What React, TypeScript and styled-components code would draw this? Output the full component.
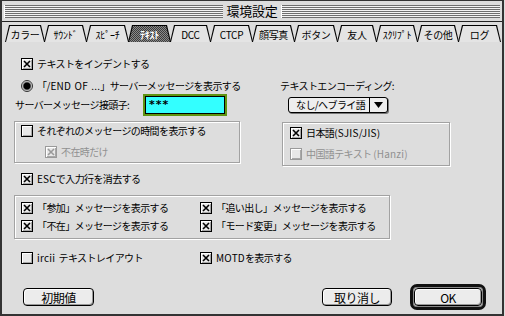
import styled, { createGlobalStyle } from "styled-components";

const Global = createGlobalStyle`
  html, body { margin: 0; padding: 0; background: #dddddd; }
  body {
    font-family: "Noto Sans CJK JP", "Liberation Sans", sans-serif;
    font-size: 10px;
    color: #000;
  }
`;

const Window = styled.div`
  width: 504px;
  height: 316px;
  box-sizing: border-box;
  background: #dddddd;
  border: 2px solid #333;
  border-top: 1px solid #333;
  display: flex;
  flex-direction: column;
`;

const TitleBar = styled.div`
  height: 21px;
  box-sizing: border-box;
  border-bottom: 1px solid #222;
  display: flex;
  align-items: center;
  padding: 0 2px;
  background: #dddddd;
`;

const Stripes = styled.div`
  flex: 1;
  height: 13px;
  background: repeating-linear-gradient(to bottom, #6f6f6f 0 1px, #f4f4f4 1px 2px);
  border-left: 1px solid #fff;
`;

const Title = styled.div`
  padding: 0 4px;
  font-size: 13px;
  letter-spacing: -0.3px;
  line-height: 16px;
`;

const TabBar = styled.div`
  height: 20px;
  display: flex;
  align-items: flex-end;
  padding-left: 3px;
`;

const tabShape = "polygon(0 100%, 4px 0, calc(100% - 4px) 0, 100% 100%)";

const Tab = styled.div<{ $w: number }>`
  width: ${(p) => p.$w}px;
  height: 17px;
  margin-right: -1px;
  background: #000;
  clip-path: ${tabShape};
  padding: 1px 1px 0;
  box-sizing: border-box;
  display: flex;
`;

const TabFace = styled.div<{ $active?: boolean }>`
  flex: 1;
  clip-path: ${tabShape};
  background: ${(p) =>
    p.$active
      ? "repeating-conic-gradient(#3c3c3c 0 25%, #8a8a8a 0 50%) 0 0 / 2px 2px"
      : "#e4e4e4"};
  color: ${(p) => (p.$active ? "#fff" : "#000")};
  font-weight: ${(p) => (p.$active ? 700 : 400)};
  font-size: 10px;
  display: flex;
  align-items: center;
  justify-content: center;
  letter-spacing: -0.3px;
  white-space: nowrap;
`;

const Panel = styled.div`
  flex: 1;
  display: flex;
  flex-direction: column;
  padding: 0 16px 0 12px;
`;

const Row = styled.div<{ $top: number; $h?: number }>`
  display: flex;
  align-items: center;
  margin-top: ${(p) => p.$top}px;
  height: ${(p) => p.$h ?? 14}px;
  flex: none;
`;

const Left = styled.div<{ $w: number; $pad?: number }>`
  width: ${(p) => p.$w}px;
  padding-left: ${(p) => p.$pad ?? 0}px;
  box-sizing: border-box;
  display: flex;
  align-items: center;
  flex: none;
`;

const Label = styled.span<{ $disabled?: boolean }>`
  color: ${(p) => (p.$disabled ? "#909090" : "#000")};
  letter-spacing: -0.6px;
  white-space: nowrap;
  line-height: 14px;
`;

const Lat = styled.span`
  letter-spacing: 0.2px;
  word-spacing: 1px;
`;

const CheckRow = styled.div<{ $indent?: number; $top?: number }>`
  display: flex;
  align-items: center;
  height: 14px;
  margin-left: ${(p) => p.$indent ?? 0}px;
  margin-top: ${(p) => p.$top ?? 0}px;
`;

const Box = styled.span<{ $disabled?: boolean }>`
  width: 12px;
  height: 12px;
  margin-right: 4px;
  box-sizing: border-box;
  border: 1px solid ${(p) => (p.$disabled ? "#9a9a9a" : "#000")};
  background: #e8e8e8;
  box-shadow: inset 1px 1px 0 #fff, inset -1px -1px 0 #a8a8a8;
  display: inline-flex;
  align-items: center;
  justify-content: center;
  flex: none;
`;

const Radio = styled.span`
  width: 12px;
  height: 12px;
  margin-right: 4px;
  border-radius: 50%;
  box-sizing: border-box;
  border: 1px solid #333;
  background: radial-gradient(circle at 50% 50%, #000 0 3.2px, #555 3.6px, #bdbdbd 4.5px, #eee 5.2px);
  flex: none;
`;

function Check({ on, disabled, children }: { on?: boolean; disabled?: boolean; children: React.ReactNode }) {
  const c = disabled ? "#9a9a9a" : "#000";
  return (
    <>
      <Box $disabled={disabled}>
        {on && (
          <svg width="8" height="8" viewBox="0 0 8 8">
            <path d="M1 1 L7 7 M7 1 L1 7" stroke={c} strokeWidth="1.6" />
          </svg>
        )}
      </Box>
      <Label $disabled={disabled}>{children}</Label>
    </>
  );
}

const Field = styled.div`
  width: 84px;
  height: 22px;
  box-sizing: border-box;
  border: 2px solid #5f9410;
  display: flex;
`;

const FieldInner = styled.div`
  flex: 1;
  border: 1px solid #000;
  background: #33ffff;
  font-weight: 700;
  font-family: "DejaVu Sans", sans-serif;
  font-size: 11px;
  line-height: 15px;
  padding-left: 3px;
  letter-spacing: 1px;
`;

const Popup = styled.div`
  margin-left: 8px;
  width: 100px;
  height: 16px;
  box-sizing: border-box;
  border: 1px solid #000;
  border-radius: 3px;
  background: #eeeeee;
  box-shadow: 1px 1px 0 #777;
  display: flex;
  align-items: stretch;
`;

const PopupText = styled.div`
  flex: 1;
  padding-left: 7px;
  line-height: 14px;
  letter-spacing: -0.6px;
`;

const PopupArrow = styled.div`
  width: 17px;
  border-left: 1px solid #000;
  display: flex;
  align-items: center;
  justify-content: center;
`;

const Group = styled.div<{ $w: number; $h: number; $top?: number; $ml?: number; $pl: number; $pt: number }>`
  width: ${(p) => p.$w}px;
  height: ${(p) => p.$h}px;
  margin-top: ${(p) => p.$top ?? 0}px;
  margin-left: ${(p) => p.$ml ?? 0}px;
  padding: ${(p) => p.$pt}px 0 0 ${(p) => p.$pl}px;
  box-sizing: border-box;
  border: 1px solid #a2a2a2;
  box-shadow: 1px 1px 0 #fff, inset 1px 1px 0 #fff;
  flex: none;
`;

const GroupGrid = styled.div`
  display: grid;
  grid-template-columns: 179px auto;
  row-gap: 4px;
`;

const GroupRow = styled.div`
  display: flex;
  align-items: flex-start;
  height: 45px;
  margin-top: 5px;
  flex: none;
`;

const Buttons = styled.div`
  display: flex;
  align-items: center;
  height: 26px;
  margin-top: 19px;
  padding-left: 9px;
  flex: none;
`;

const Button = styled.div<{ $w: number }>`
  width: ${(p) => p.$w}px;
  height: 18px;
  box-sizing: border-box;
  border: 1px solid #000;
  border-radius: 4px;
  background: #ececec;
  box-shadow: inset 1px 1px 0 #fff, inset -1px -1px 0 #999;
  display: flex;
  align-items: center;
  justify-content: center;
  font-size: 12px;
  letter-spacing: -0.5px;
`;

const DefaultRing = styled.div`
  width: 76px;
  height: 26px;
  box-sizing: border-box;
  border: 3px solid #111;
  border-radius: 7px;
  box-shadow: inset 0 0 0 1px #888;
  display: flex;
  align-items: center;
  justify-content: center;
  margin-left: 18px;
`;

const Spacer = styled.div`
  flex: 1;
`;

const tabs = [
  { label: "カラー", w: 40 },
  { label: "ｻｳﾝﾄﾞ", w: 43 },
  { label: "ｽﾋﾟｰﾁ", w: 43 },
  { label: "ﾃｷｽﾄ", w: 43, active: true },
  { label: "DCC", w: 41 },
  { label: "CTCP", w: 43 },
  { label: "顔写真", w: 43 },
  { label: "ボタン", w: 44 },
  { label: "友人", w: 40 },
  { label: "ｽｸﾘﾌﾟﾄ", w: 42 },
  { label: "その他", w: 42 },
  { label: "ログ", w: 43 },
];

export default function App() {
  return (
    <>
      <Global />
      <Window>
        <TitleBar>
          <Stripes />
          <Title>環境設定</Title>
          <Stripes />
        </TitleBar>
        <TabBar>
          {tabs.map((t) => (
            <Tab key={t.label} $w={t.w}>
              <TabFace $active={t.active}>{t.label}</TabFace>
            </Tab>
          ))}
        </TabBar>
        <Panel>
          <Row $top={15}>
            <Left $w={266} $pad={7}>
              <Check on>テキストをインデントする</Check>
            </Left>
          </Row>
          <Row $top={8}>
            <Left $w={266} $pad={7}>
              <Radio />
              <Label>
                「<Lat>/END OF ...</Lat>」サーバーメッセージを表示する
              </Label>
            </Left>
            <Label>テキストエンコーディング:</Label>
          </Row>
          <Row $top={1} $h={22}>
            <Left $w={266} $pad={1}>
              <Label style={{ width: 128 }}>サーバーメッセージ接頭子:</Label>
              <Field>
                <FieldInner>***</FieldInner>
              </Field>
            </Left>
            <Popup>
              <PopupText>なし/ヘブライ語</PopupText>
              <PopupArrow>
                <svg width="9" height="6" viewBox="0 0 9 6">
                  <path d="M0 0 H9 L4.5 6 Z" fill="#000" />
                </svg>
              </PopupArrow>
            </Popup>
          </Row>
          <GroupRow>
            <Group $w={226} $h={42} $pl={6} $pt={2}>
              <CheckRow>
                <Check>それぞれのメッセージの時間を表示する</Check>
              </CheckRow>
              <CheckRow $indent={24} $top={7}>
                <Check on disabled>不在時だけ</Check>
              </CheckRow>
            </Group>
            <Group $w={168} $h={44} $top={1} $ml={42} $pl={7} $pt={3}>
              <CheckRow>
                <Check on>
                  日本語<Lat>(SJIS/JIS)</Lat>
                </Check>
              </CheckRow>
              <CheckRow $top={7}>
                <Check disabled>
                  中国語テキスト <Lat>(Hanzi)</Lat>
                </Check>
              </CheckRow>
            </Group>
          </GroupRow>
          <Row $top={6}>
            <Left $w={266} $pad={7}>
              <Check on>
                <Lat>ESC</Lat>で入力行を消去する
              </Check>
            </Left>
          </Row>
          <Group $w={376} $h={44} $top={9} $pl={6} $pt={5}>
            <GroupGrid>
              <CheckRow>
                <Check on>「参加」メッセージを表示する</Check>
              </CheckRow>
              <CheckRow>
                <Check on>「追い出し」メッセージを表示する</Check>
              </CheckRow>
              <CheckRow>
                <Check on>「不在」メッセージを表示する</Check>
              </CheckRow>
              <CheckRow>
                <Check on>「モード変更」メッセージを表示する</Check>
              </CheckRow>
            </GroupGrid>
          </Group>
          <Row $top={12}>
            <Left $w={186} $pad={7}>
              <Check>
                <Lat>ircii </Lat>テキストレイアウト
              </Check>
            </Left>
            <Check on>
              <Lat>MOTD</Lat>を表示する
            </Check>
          </Row>
          <Buttons>
            <Button $w={71}>初期値</Button>
            <Spacer />
            <Button $w={70}>取り消し</Button>
            <DefaultRing>
              <Button $w={68}>OK</Button>
            </DefaultRing>
          </Buttons>
        </Panel>
      </Window>
    </>
  );
}
